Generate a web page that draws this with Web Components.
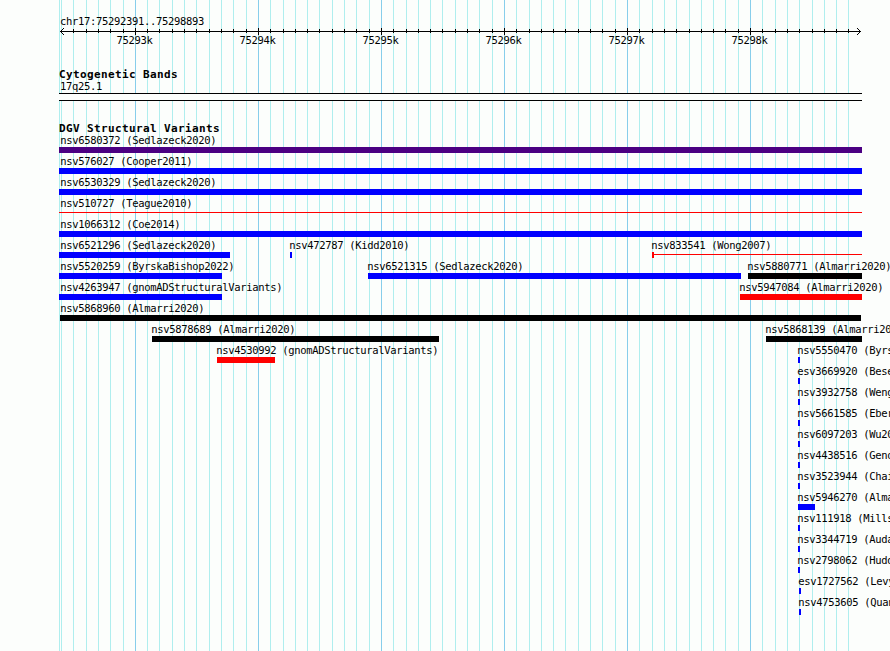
<!DOCTYPE html>
<html lang="en">
<head>
<meta charset="utf-8">
<title>chr17:75292391..75298893</title>
<style>
    body {
        margin: 0;
        background-color: #fcfefc;
    }
</style>
</head>
<body>
<genome-browser></genome-browser>

<script>
const tracks = [
    [["nsv6580372 (Sedlazeck2020)", 59, 862, "#4b0082"]],
    [["nsv576027 (Cooper2011)", 59, 862, "#00f"]],
    [["nsv6530329 (Sedlazeck2020)", 59, 862, "#00f"]],
    [["nsv510727 (Teague2010)", 59, 862, "#f00", "line"]],
    [["nsv1066312 (Coe2014)", 59, 862, "#00f"]],
    [["nsv6521296 (Sedlazeck2020)", 59, 230, "#00f"], ["nsv472787 (Kidd2010)", 290, 292, "#00f", "", 289], ["nsv833541 (Wong2007)", 652, 862, "#f00", "start", 651]],
    [["nsv5520259 (ByrskaBishop2022)", 59, 222, "#00f"], ["nsv6521315 (Sedlazeck2020)", 368, 741, "#00f", "", 367], ["nsv5880771 (Almarri2020)", 748, 862, "#000", "", 747]],
    [["nsv4263947 (gnomADStructuralVariants)", 59, 222, "#00f"], ["nsv5947084 (Almarri2020)", 740, 862, "#f00", "", 739]],
    [["nsv5868960 (Almarri2020)", 60, 861, "#000", "", 60]],
    [["nsv5878689 (Almarri2020)", 152, 439, "#000", "", 151], ["nsv5868139 (Almarri2020)", 766, 862, "#000", "", 765]],
    [["nsv4530992 (gnomADStructuralVariants)", 217, 275, "#f00", "", 216], ["nsv5550470 (ByrskaBishop2022)", 798, 800, "#00f", "", 797]],
    [["esv3669920 (Besenbacher2016)", 798, 800, "#00f", "", 797]],
    [["nsv3932758 (Weng2019)", 798, 800, "#00f", "", 797]],
    [["nsv5661585 (Ebert2021)", 798, 800, "#00f", "", 797]],
    [["nsv6097203 (Wu2021)", 798, 800, "#00f", "", 797]],
    [["nsv4438516 (Genome)", 798, 800, "#00f", "", 797]],
    [["nsv3523944 (Chaisson2019)", 798, 800, "#00f", "", 797]],
    [["nsv5946270 (Almarri2020)", 798, 815, "#00f", "", 797]],
    [["nsv111918 (Mills2006)", 798, 800, "#00f", "", 797]],
    [["nsv3344719 (Audano2019)", 798, 800, "#00f", "", 797]],
    [["nsv2798062 (Huddleston2017)", 798, 800, "#00f", "", 797]],
    [["esv1727562 (Levy2007)", 799, 801, "#00f", "", 798]],
    [["nsv4753605 (Quan2021)", 799, 801, "#00f", "", 798]]
];

// x of each 100 bp step, every tenth one counted from 75293k
const steps = [];
for (let i = -6; i <= 58; i++) {
    steps.push({ x: Math.floor(135.355 + i * 12.304), major: i % 10 === 0, index: i });
}

class GridLines extends HTMLElement {

    constructor() {
        super();
        this.shadowDOM = this.attachShadow({ mode: "open" });
    }

    connectedCallback() {
        this.render();
    }

    render() {
        this.shadowDOM.innerHTML = `
            <style>
                :host {
                    display: block;
                }

                svg {
                    display: block;
                }
            </style>
            <svg width="890" height="651" shape-rendering="crispEdges">
                <rect x="59" width="1" height="651" fill="#afeeee"/>
                ${steps.map(s => `<rect x="${s.x}" width="1" height="651" fill="${s.major ? "#87ceeb" : "#afeeee"}"/>`).join("")}
            </svg>
        `;
    }
}

class ScaleRuler extends HTMLElement {

    constructor() {
        super();
        this.shadowDOM = this.attachShadow({ mode: "open" });
    }

    connectedCallback() {
        this.render();
    }

    render() {
        const ticks = steps.filter(s => s.index > -6);
        this.shadowDOM.innerHTML = `
            <style>
                :host {
                    display: block;
                    height: 34px;
                }

                .region {
                    padding-left: 60px;
                    height: 11px;
                    line-height: 10px;
                }

                svg {
                    display: block;
                }

                .labels {
                    display: grid;
                    grid-template-columns: repeat(6, 123px);
                    padding-left: 116.4px;
                    line-height: 8px;
                }
            </style>
            <div class="region">${this.getAttribute("region")}</div>
            <svg width="890" height="9" shape-rendering="crispEdges">
                <rect x="60" y="4" width="801" height="1"/>
                ${ticks.map(s => s.major
                    ? `<rect x="${s.x}" y="1" width="1" height="7"/>`
                    : `<rect x="${s.x}" y="2" width="1" height="4"/>`).join("")}
                <path d="M61 3h1v-1h1v-1h1v1h-1v1h-1v1h-1zM61 5h1v1h1v1h1v1h-1v-1h-1v-1h-1zM859 3h1v1h-1zM858 2h1v1h-1zM857 1h1v1h-1zM859 5h1v1h-1zM858 6h1v1h-1zM857 7h1v1h-1z"/>
            </svg>
            <div class="labels">
                ${[293, 294, 295, 296, 297, 298].map(n => `<span>75${n}k</span>`).join("")}
            </div>
        `;
    }
}

class TrackSection extends HTMLElement {

    constructor() {
        super();
        this.shadowDOM = this.attachShadow({ mode: "open" });
    }

    connectedCallback() {
        this.render();
    }

    render() {
        this.shadowDOM.innerHTML = `
            <style>
                :host {
                    display: block;
                }

                .title {
                    height: 11px;
                    padding-left: 59px;
                    font-size: 11px;
                    font-weight: bold;
                    letter-spacing: 0.378px;
                }
            </style>
            <div class="title">${this.getAttribute("label")}</div>
            <slot></slot>
        `;
    }
}

class CytoBand extends HTMLElement {

    constructor() {
        super();
        this.shadowDOM = this.attachShadow({ mode: "open" });
    }

    connectedCallback() {
        this.shadowDOM.innerHTML = `
            <style>
                :host {
                    display: block;
                    margin-left: 59px;
                    width: 803px;
                }

                .name {
                    height: 13px;
                    padding-left: 1px;
                }

                .band {
                    box-sizing: border-box;
                    height: 8px;
                    background-color: #fcfefc;
                    border: solid #000;
                    border-width: 1px 0;
                }
            </style>
            <div class="name"><slot></slot></div>
            <div class="band"></div>
        `;
    }
}

class VariantRow extends HTMLElement {

    constructor() {
        super();
        this.shadowDOM = this.attachShadow({ mode: "open" });
    }

    set variants(list) {
        let end = 0;
        const cells = list.map(([name, from, to, color, shape, textX = 60]) => {
            const gap = from - end;
            end = to;
            return `
                <div class="variant" style="margin-left: ${gap}px; width: ${to - from}px; color: ${color}">
                    <div class="name" style="text-indent: ${textX - from + 0.3}px">${name}</div>
                    <div class="bar ${shape || ""}"></div>
                </div>`;
        });
        this.shadowDOM.innerHTML = `
            <style>
                :host {
                    display: flex;
                    height: 21px;
                }

                .variant {
                    flex: none;
                }

                .name {
                    height: 13px;
                    color: #000;
                    line-height: 12px;
                }

                .bar {
                    height: 6px;
                    background-color: currentColor;
                }

                .line,
                .start {
                    background: linear-gradient(currentColor, currentColor) 0 2px / 100% 1px no-repeat;
                }

                .start {
                    box-sizing: border-box;
                    border-left: 2px solid currentColor;
                }
            </style>
            ${cells.join("")}
        `;
    }
}

class GenomeBrowser extends HTMLElement {

    constructor() {
        super();
        this.shadowDOM = this.attachShadow({ mode: "open" });
    }

    connectedCallback() {
        this.render();
    }

    render() {
        this.shadowDOM.innerHTML = `
            <style>
                :host {
                    display: grid;
                    width: 890px;
                    height: 651px;
                    overflow: hidden;
                    color: #000;
                    font: 10.5px/12px "DejaVu Sans Mono", "Liberation Mono", monospace;
                    letter-spacing: -0.321px;
                    white-space: nowrap;
                }

                grid-lines,
                main {
                    grid-area: 1 / 1;
                    min-width: 0;
                }

                main {
                    padding-top: 16px;
                    z-index: 1;
                }

                .cytogenetic {
                    margin-top: 19px;
                }

                .structural {
                    margin-top: 22px;
                }
            </style>
            <grid-lines></grid-lines>
            <main>
                <scale-ruler region="chr17:75292391..75298893"></scale-ruler>
                <track-section class="cytogenetic" label="Cytogenetic Bands">
                    <cyto-band>17q25.1</cyto-band>
                </track-section>
                <track-section class="structural" label="DGV Structural Variants"></track-section>
            </main>
        `;
        const section = this.shadowDOM.querySelector(".structural");
        for (const variants of tracks) {
            const row = document.createElement("variant-row");
            row.variants = variants;
            section.append(row);
        }
    }
}

customElements.define("grid-lines", GridLines);
customElements.define("scale-ruler", ScaleRuler);
customElements.define("track-section", TrackSection);
customElements.define("cyto-band", CytoBand);
customElements.define("variant-row", VariantRow);
customElements.define("genome-browser", GenomeBrowser);
</script>
</body>
</html>
